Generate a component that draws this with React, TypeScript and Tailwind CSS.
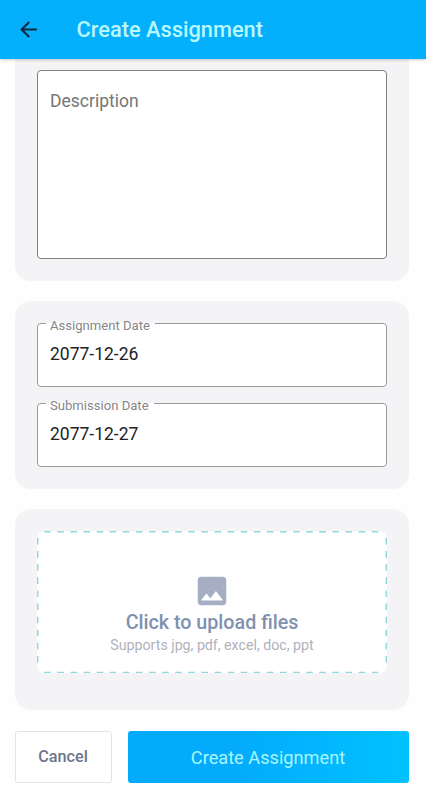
type DateFieldProps = {
    label: string;
    value: string;
}

function DateField({label, value}: DateFieldProps) {
    return (
        <fieldset className="h-[73px] w-full rounded-[4px] border border-[#999] bg-white pl-[8px]">
            <legend className="h-[18px] whitespace-nowrap pl-[4px] pr-[5px] text-[13.1px] leading-[23px] text-[#858588]">
                {label}
            </legend>
            <p className="pl-[4px] pt-[10px] text-[17.5px] leading-[24px] text-[#222]">{value}</p>
        </fieldset>
    )
}

function UploadBox() {
    return (
        <div className="relative flex h-[142px] w-full flex-col items-center rounded-[8px] bg-white pt-[41px]">
            <svg className="absolute inset-0 h-full w-full" viewBox="0 0 350 142" fill="none" stroke="#8fd8dd"
                 strokeWidth="1.5" strokeDasharray="6.6 6.5">
                <path d="M7.2 .7H343"/>
                <path d="M7.2 141.5H343"/>
                <path d="M.7 7V135"/>
                <path d="M349.3 7V135"/>
            </svg>
            <svg className="size-[38px]" viewBox="0 0 24 24" fill="#a6aec3">
                <path
                    d="M21 19V5c0-1.100-.9-2-2-2H5c-1.100 0-2 .9-2 2v14c0 1.100.9 2 2 2h14c1.100 0 2-.9 2-2zM8.500 13.500l2.500 3.010L14.500 12l4.500 6H5l3.500-4.500z"/>
            </svg>
            <p className="pt-px text-[19.7px] font-medium leading-[24px] text-[#8091af]">Click to upload files</p>
            <p className="text-[14.2px] leading-[20px] text-[#b0b1bc]">Supports jpg, pdf, excel, doc, ppt</p>
        </div>
    )
}

export default function App() {
    return (
        <div className="flex h-[800px] w-[426px] flex-col overflow-hidden bg-[#fefefe] font-['Roboto',sans-serif]">
            <header className="z-10 flex h-[59px] shrink-0 items-center bg-[#04affb] shadow-[0_1px_3px_rgba(0,0,0,0.2)]">
                <button type="button" aria-label="Back" className="ml-[16px]">
                    <svg className="size-[25px]" viewBox="0 0 24 24" fill="#0b2942">
                        <path d="M20 11H7.830l5.590-5.590L12 4l-8 8 8 8 1.410-1.410L7.830 13H20v-2z"/>
                    </svg>
                </button>
                <h1 className="ml-[35.5px] pt-[2px] text-[21.8px] font-medium text-[#b8f8ff]">Create Assignment</h1>
            </header>

            <main className="flex flex-col pl-[15px]">
                <section className="h-[222px] w-[394px] rounded-b-[16px] bg-[#f4f4f7] pl-[22px] pt-[11px]">
                    <div className="h-[189px] w-[350px] rounded-[4px] border border-[#808080] bg-white pl-[12px] pt-[18px]">
                        <p className="text-[17.5px] leading-[24px] text-[#757575]">Description</p>
                    </div>
                </section>

                <section className="mt-[20px] flex h-[188px] w-[394px] flex-col gap-[7px] rounded-[16px] bg-[#f4f4f7] px-[22px] pt-[13px]">
                    <DateField label="Assignment Date" value="2077-12-26"/>
                    <DateField label="Submission Date" value="2077-12-27"/>
                </section>

                <section className="mt-[20px] h-[201px] w-[394px] rounded-[16px] bg-[#f4f4f7] px-[22px] pt-[22px]">
                    <UploadBox/>
                </section>

                <div className="mt-[21px] flex w-[394px] gap-[16px]">
                    <button type="button"
                            className="h-[52px] w-[97px] rounded-[3px] border border-[#e2e3e8] bg-white pr-[1px] text-[16.2px] font-medium text-[#6b768a]">
                        Cancel
                    </button>
                    <button type="button"
                            className="h-[52px] flex-1 rounded-[3px] bg-linear-to-r from-[#04abfd] from-40% to-[#02c2ff] pr-[1px] pt-px text-[18.2px] text-[#a8f6ff]">
                        Create Assignment
                    </button>
                </div>
            </main>
        </div>
    )
}
